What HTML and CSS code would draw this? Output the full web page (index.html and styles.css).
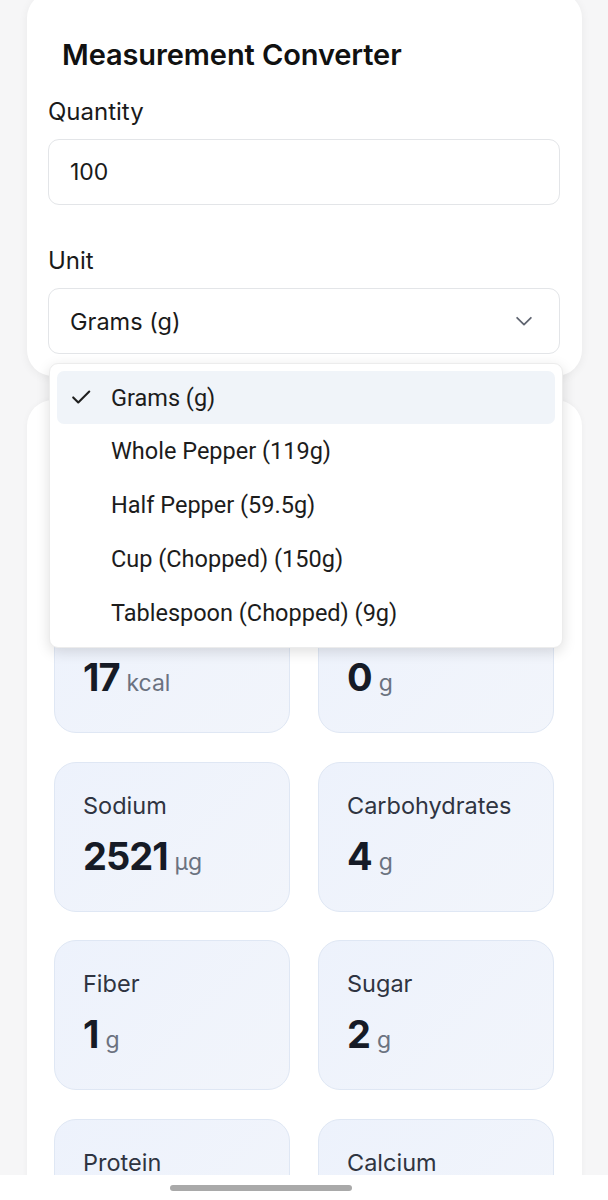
FILE: index.html
```html
<!DOCTYPE html>
<html lang="en">
<head>
<meta charset="utf-8">
<title>Measurement Converter</title>
<link rel="stylesheet" href="styles.css">
</head>
<body>
<div class="page">
  <section class="converter">
    <h2 class="converter-title">Measurement Converter</h2>
    <div class="field">
      <label class="field-label">Quantity</label>
      <div class="input">100</div>
    </div>
    <div class="field">
      <label class="field-label">Unit</label>
      <div class="select">
        <span>Grams (g)</span>
        <svg class="chevron" width="22" height="22" viewBox="0 0 24 24" fill="none" stroke="#5f6470" stroke-width="1.9" stroke-linecap="round" stroke-linejoin="round"><path d="M4.5 8.5l7.5 7.5 7.5-7.5"/></svg>
      </div>
    </div>
    <ul class="dropdown">
      <li class="option selected">
        <svg class="check" width="22" height="22" viewBox="0 0 24 24" fill="none" stroke="#1f1f1f" stroke-width="2.3" stroke-linecap="round" stroke-linejoin="round"><path d="M3.5 12.5l5.5 5.5L21 6"/></svg>
        <span>Grams (g)</span>
      </li>
      <li class="option"><span>Whole Pepper (119g)</span></li>
      <li class="option"><span>Half Pepper (59.5g)</span></li>
      <li class="option"><span>Cup (Chopped) (150g)</span></li>
      <li class="option"><span>Tablespoon (Chopped) (9g)</span></li>
    </ul>
  </section>

  <section class="nutrition">
    <div class="grid">
      <div class="stat"><div class="stat-label">Calories</div><div class="stat-value">17<span class="unit">kcal</span></div></div>
      <div class="stat"><div class="stat-label">Fat</div><div class="stat-value">0<span class="unit">g</span></div></div>
      <div class="stat"><div class="stat-label">Sodium</div><div class="stat-value">2521<span class="unit">µg</span></div></div>
      <div class="stat"><div class="stat-label">Carbohydrates</div><div class="stat-value">4<span class="unit">g</span></div></div>
      <div class="stat"><div class="stat-label">Fiber</div><div class="stat-value">1<span class="unit">g</span></div></div>
      <div class="stat"><div class="stat-label">Sugar</div><div class="stat-value">2<span class="unit">g</span></div></div>
      <div class="stat"><div class="stat-label">Protein</div><div class="stat-value">1<span class="unit">g</span></div></div>
      <div class="stat"><div class="stat-label">Calcium</div><div class="stat-value">10<span class="unit">mg</span></div></div>
    </div>
  </section>
</div>
<div class="home-bar"><div class="home-indicator"></div></div>
</body>
</html>
```

FILE: styles.css
```css
* { box-sizing: border-box; }
html, body { margin: 0; padding: 0; }
body {
  background: #f6f6f7;
  font-family: "Inter", "DejaVu Sans", sans-serif;
  color: #111827;
  height: 1200px;
  overflow: hidden;
  position: relative;
}
.page {
  padding: 0 26px 0 27px;
}
.converter {
  position: relative;
  margin-top: -8px;
  background: #fff;
  border-radius: 26px;
  box-shadow: 0 2px 10px rgba(0,0,0,0.06);
  padding: 45px 22px 22px 21px;
  z-index: 2;
}
.converter-title {
  margin: 0 0 24px 14px;
  font-size: 29px;
  font-weight: 600;
  letter-spacing: -0.1px;
  color: #111111;
  line-height: 36px;
}
.field { display: flex; flex-direction: column; }
.field + .field { margin-top: 41px; }
.field-label {
  font-size: 24px;
  line-height: 30px;
  color: #1a1a1a;
  margin-bottom: 12px;
}
.input, .select {
  height: 66px;
  border: 1.5px solid #e3e5e8;
  border-radius: 11px;
  padding: 0 21px;
  display: flex;
  align-items: center;
  font-size: 23px;
  color: #1a1a1a;
}
.select { font-size: 23.5px; justify-content: space-between; padding-right: 24px; }
.chevron { flex: none; }
.dropdown {
  position: absolute;
  left: 22px;
  right: 19px;
  top: 371px;
  margin: 0;
  list-style: none;
  background: #fff;
  border-radius: 9px;
  border: 1px solid #ececec;
  box-shadow: 0 4px 14px rgba(0,0,0,0.13);
  padding: 7px 7px 7px;
  font-family: "Roboto", sans-serif;
  z-index: 5;
}
.option {
  height: 54px;
  display: flex;
  align-items: center;
  padding-left: 54px;
  font-size: 23.5px;
  color: #1c1c1c;
  position: relative;
  border-radius: 7px;
}
.option.selected { background: #f0f4f9; height: 53px; }
.check { position: absolute; left: 13px; top: 15px; }

.nutrition {
  background: #fff;
  margin-top: 24px;
  padding: 183px 28px 40px 27px;
  border-radius: 26px;
  box-shadow: 0 0 6px rgba(0,0,0,0.04);
}
.grid {
  display: grid;
  grid-template-columns: 236px 236px;
  column-gap: 28px;
  row-gap: 28.5px;
}
.stat {
  height: 150px;
  border-radius: 22px;
  border: 1.5px solid #dfe7f4;
  background: linear-gradient(135deg, #edf2fc 0%, #f2f5fb 100%);
  padding: 28px 20px 0 28px;
}
.stat-label {
  font-size: 23.5px;
  line-height: 30px;
  color: #2f3441;
}
.stat-value {
  margin-top: 12px;
  font-size: 38px;
  font-weight: 700;
  color: #161b26;
  line-height: 46px;
  letter-spacing: -1px;
}
.unit {
  font-size: 23px;
  font-weight: 400;
  color: #6b7280;
  margin-left: 7px;
  letter-spacing: 0;
}
.home-bar {
  position: absolute;
  left: 0; right: 0; bottom: 0;
  height: 25px;
  background: #fff;
  display: flex;
  justify-content: center;
  align-items: flex-start;
  padding-top: 10px;
  z-index: 10;
}
.home-indicator {
  width: 182px;
  height: 6px;
  border-radius: 3px;
  background: #a9a9a9;
  margin-left: -86px;
}
```
